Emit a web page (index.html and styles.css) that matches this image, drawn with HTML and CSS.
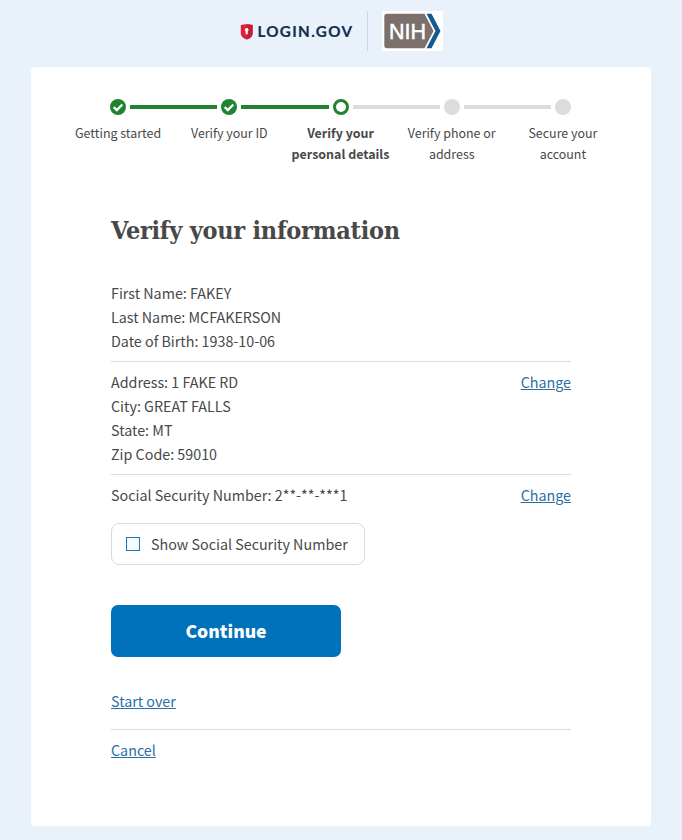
FILE: index.html
```html
<!DOCTYPE html>
<html lang="en">
<head>
<meta charset="utf-8">
<title>Verify your information</title>
<link rel="stylesheet" href="styles.css">
</head>
<body>
<header class="header">
  <svg class="brand" width="113" height="18" viewBox="0 0 113 18" role="img" aria-label="LOGIN.GOV">
    <path d="M0.8 2.1Q6.7 .4 12.6 2.1V10.5Q12.5 14.5 6.7 16.5Q.9 14.5.8 10.5Z" fill="#e21d3e"/>
    <path d="M6.7 1.2Q9.7 1.2 12.6 2.1V10.5Q12.5 14.5 6.7 16.5Z" fill="#c21f32"/>
    <path d="M6.7 4.9a1.9 1.9 0 0 1 1.1 3.4V11.3H5.6V8.3A1.9 1.9 0 0 1 6.7 4.9Z" fill="#fff"/>
    <text class="brand-text" x="17.4" y="13.6" textLength="96" lengthAdjust="spacingAndGlyphs">LOGIN.GOV</text>
  </svg>
  <span class="separator"></span>
  <svg class="agency" width="61" height="40" viewBox="0 0 61 40" role="img" aria-label="NIH">
    <path d="M0 0H61V40H0Z" fill="#fff"/>
    <path d="M5 2.7H42.5L51.5 20L42.5 37.3H5Q2.3 37.3 2.3 34.6V5.4Q2.3 2.7 5 2.7Z" fill="#7b706b"/>
    <path d="M44.5 2.7H49.5L58.5 20L49.5 37.3H44.5L53.5 20Z" fill="#17588f"/>
    <text class="agency-text" x="7" y="27.7" textLength="37">NIH</text>
  </svg>
</header>
<main class="card">
  <ol class="steps">
    <li class="step complete"><svg class="check" viewBox="0 0 16 16"><path d="M3.7 8.1L6.8 11.1L12.3 5.5"/></svg><span>Getting started</span></li>
    <li class="step complete"><svg class="check" viewBox="0 0 16 16"><path d="M3.7 8.1L6.8 11.1L12.3 5.5"/></svg><span>Verify your ID</span></li>
    <li class="step current"><i class="dot"></i><span>Verify your<br>personal details</span></li>
    <li class="step"><i class="dot"></i><span>Verify phone or<br>address</span></li>
    <li class="step"><i class="dot"></i><span>Secure your<br>account</span></li>
  </ol>
  <div class="content">
    <h1>Verify your information</h1>
    <section class="info">
      <div>
        <div>First Name: FAKEY</div>
        <div>Last Name: MCFAKERSON</div>
        <div>Date of Birth: 1938-10-06</div>
      </div>
    </section>
    <section class="info">
      <div>
        <div>Address: 1 FAKE RD</div>
        <div>City: GREAT FALLS</div>
        <div>State: MT</div>
        <div>Zip Code: 59010</div>
      </div>
      <a href="#">Change</a>
    </section>
    <section class="info">
      <div>Social Security Number: 2**-**-***1</div>
      <a href="#">Change</a>
    </section>
    <label class="toggle"><input type="checkbox">Show Social Security Number</label>
    <button class="continue">Continue</button>
    <div class="restart"><a href="#">Start over</a></div>
    <div class="cancel"><a href="#">Cancel</a></div>
  </div>
</main>
</body>
</html>
```
FILE: styles.css
```css
* { box-sizing: border-box; }
body {
  margin: 0;
  height: 840px;
  background: #e9f2fa;
  color: #484848;
  font: 14.3px/24px "Noto Sans CJK JP", "Noto Sans", sans-serif;
}
.header {
  display: flex;
  height: 67px;
  padding: 11px 0 0 240px;
}
.brand { margin-top: 12px; }
.brand-text { font: 700 14.5px Lato, sans-serif; letter-spacing: 1.3px; fill: #112e51; stroke: #112e51; stroke-width: .2px; }
.separator { width: 1px; height: 40px; margin: 0 14px; background: #c8d9e6; }
.agency-text { font: 400 21.5px "Liberation Sans", sans-serif; fill: #fff; stroke: #fff; stroke-width: .5px; }
.card {
  width: 620px;
  height: 759px;
  margin-left: 31px;
  padding-top: 32px;
  border-radius: 4px;
  background: #fff;
}
.steps {
  display: flex;
  width: 556px;
  margin: 0 0 0 31.5px;
  padding: 0;
  list-style: none;
}
.step {
  position: relative;
  display: flex;
  flex: 1;
  flex-direction: column;
  align-items: center;
  gap: 8px;
  text-align: center;
  font-size: 12.45px;
  line-height: 21px;
  white-space: nowrap;
}
.dot, .check { width: 16px; height: 16px; border-radius: 50%; background: #dcdcdc; }
.check { background: #1f832f; fill: none; stroke: #fff; stroke-width: 2.3; }
.current { font-weight: 700; }
.current .dot { border: 3px solid #1f832f; background: #fff; }
.step:not(:last-child)::after {
  content: "";
  position: absolute;
  top: 6px;
  left: calc(50% + 12px);
  width: calc(100% - 24px);
  height: 4px;
  background: #dcdcdc;
}
.complete::after { background: #1f832f !important; }
.content { width: 460px; margin-left: 80px; }
h1 {
  margin: 46px 0 29px;
  font: 700 25px/40px "DejaVu Serif Condensed", "DejaVu Serif", serif;
  font-stretch: condensed;
  letter-spacing: -.25px;
  white-space: nowrap;
}
.info { display: flex; justify-content: space-between; padding: 8px 0; }
.info:first-of-type { padding-top: 1px; }
.info + .info { border-top: 1px solid #d5dbe3; }
a { color: #2a6fa5; text-decoration: underline; text-underline-offset: 1px; }
.toggle {
  display: flex;
  align-items: center;
  width: 254px;
  height: 42px;
  margin-top: 8px;
  padding-left: 14px;
  border: 1px solid #d5dae4;
  border-radius: 8px;
}
.toggle input {
  appearance: none;
  width: 14px;
  height: 14px;
  margin: 0 11px 0 0;
  border: 1px solid #2873a8;
  background: #f0faff;
}
.continue {
  display: block;
  width: 230px;
  height: 52px;
  margin: 40px 0 32px;
  padding: 0;
  border: 0;
  border-radius: 7px;
  background: #0071bb;
  color: #fff;
  font: 900 17.5px/24px "Noto Sans CJK JP", "Noto Sans", sans-serif;
}
.restart { height: 40px; }
.cancel { padding-top: 8px; border-top: 1px solid #d9dde0; }
```
